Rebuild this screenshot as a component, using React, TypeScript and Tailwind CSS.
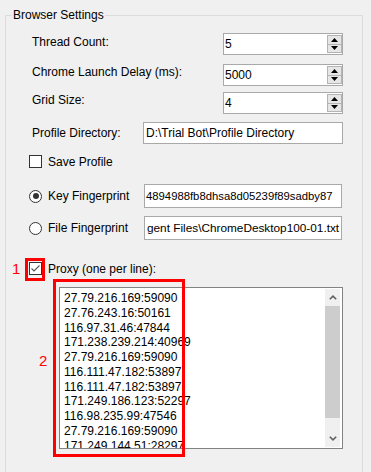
import React from "react";

const proxies = [
  "27.79.216.169:59090",
  "27.76.243.16:50161",
  "116.97.31.46:47844",
  "171.238.239.214:40969",
  "27.79.216.169:59090",
  "116.111.47.182:53897",
  "116.111.47.182:53897",
  "171.249.186.123:52297",
  "116.98.235.99:47546",
  "27.79.216.169:59090",
  "171.249.144.51:28297",
];

function SpinBox({ value }: { value: string }) {
  return (
    <div className="flex h-[22px] w-[120px] border border-[#a9a9a9] bg-white">
      <div className="flex flex-1 items-center overflow-hidden pl-[1px] leading-[16px]">{value}</div>
      <div className="flex w-[15px] flex-col py-[1px]">
        <div className="flex flex-1 items-center justify-center border border-[#b4b4b4] bg-[#e6e6e6]">
          <svg width="7" height="4" viewBox="0 0 7 4">
            <polygon points="3.5,0 7,4 0,4" fill="#000" />
          </svg>
        </div>
        <div className="flex flex-1 items-center justify-center border border-t-0 border-[#b4b4b4] bg-[#e6e6e6]">
          <svg width="7" height="4" viewBox="0 0 7 4">
            <polygon points="0,0 7,0 3.5,4" fill="#000" />
          </svg>
        </div>
      </div>
    </div>
  );
}

function CheckBox({ checked }: { checked?: boolean }) {
  return (
    <div className="flex h-[13px] w-[13px] shrink-0 items-center justify-center border border-[#333333] bg-white">
      {checked && (
        <svg width="11" height="11" viewBox="0 0 11 11">
          <polyline points="1.5,5.5 4,8 9.5,2.5" fill="none" stroke="#555" strokeWidth="1.1" />
        </svg>
      )}
    </div>
  );
}

function Radio({ checked }: { checked?: boolean }) {
  return (
    <div className="flex h-[13px] w-[13px] shrink-0 items-center justify-center rounded-full border border-[#333333] bg-white">
      {checked && <div className="h-[6px] w-[6px] rounded-full bg-[#333333]" />}
    </div>
  );
}

export default function App() {
  return (
    <div className="relative h-[472px] w-[371px] overflow-hidden bg-[#f0f0f0] pl-[5px] pt-[15px] font-['Liberation_Sans',Arial,sans-serif] text-[12px] text-black">
      <div className="h-[480px] w-[358px] border border-[#dcdcdc]">
        <div className="-mt-[9px] ml-[6px] w-fit bg-[#f0f0f0] px-[1px] leading-[16px]">Browser Settings</div>

        {/* Thread count */}
        <div className="mt-[10px] flex items-start pl-[26px]">
          <div className="mt-[1px] w-[191px] leading-[16px]">Thread Count:</div>
          <SpinBox value="5" />
        </div>
        <div className="mt-[9px] flex items-start pl-[26px]">
          <div className="w-[191px] leading-[16px]">Chrome Launch Delay (ms):</div>
          <SpinBox value="5000" />
        </div>
        <div className="mt-[6px] flex items-start pl-[26px]">
          <div className="w-[191px] leading-[16px]">Grid Size:</div>
          <SpinBox value="4" />
        </div>

        {/* Profile directory */}
        <div className="mt-[8px] flex items-center pl-[26px]">
          <div className="w-[111px] leading-[16px]">Profile Directory:</div>
          <div className="flex h-[22px] w-[200px] items-center overflow-hidden whitespace-nowrap border border-[#a9a9a9] bg-white pl-[2px] leading-[16px]">
            {"D:\\Trial Bot\\Profile Directory"}
          </div>
        </div>

        {/* Save profile */}
        <div className="mt-[11px] flex h-[13px] items-center pl-[23px]">
          <CheckBox />
          <div className="ml-[6px] leading-[16px]">Save Profile</div>
        </div>

        {/* Key fingerprint */}
        <div className="mt-[16px] flex items-center pl-[23px]">
          <Radio checked />
          <div className="ml-[6px] w-[96px] leading-[16px]">Key Fingerprint</div>
          <div className="flex h-[24px] w-[198px] items-center overflow-hidden whitespace-nowrap border border-[#a9a9a9] bg-white pl-[1px] text-[11.3px] leading-[16px]">
            4894988fb8dhsa8d05239f89sadby87
          </div>
        </div>

        {/* File fingerprint */}
        <div className="mt-[8px] flex items-center pl-[23px]">
          <Radio />
          <div className="ml-[6px] w-[96px] leading-[16px]">File Fingerprint</div>
          <div className="flex h-[24px] w-[198px] items-center overflow-hidden whitespace-nowrap border border-[#a9a9a9] bg-white pl-[2px] text-[11.8px] leading-[16px]">
            {"gent Files\\ChromeDesktop100-01.txt"}
          </div>
        </div>

        {/* Proxy */}
        <div className="mt-[22px] flex h-[13px] items-center pl-[23px]">
          <CheckBox checked />
          <div className="ml-[6px] leading-[16px]">Proxy (one per line):</div>
        </div>

        <div className="mt-[12px] pl-[53px]">
          <div className="flex h-[162px] w-[284px] border border-[#828282] bg-white">
            <div className="flex-1 overflow-hidden pl-[4px] pt-[3px] leading-[14.75px]">
              {proxies.map((p, i) => (
                <div key={i} className="whitespace-nowrap">
                  {p}
                </div>
              ))}
            </div>
            <div className="my-[1px] mr-[2px] flex w-[15px] flex-col bg-[#f0f0f0]">
              <div className="flex h-[17px] items-center justify-center">
                <svg width="8" height="5" viewBox="0 0 8 5">
                  <polyline points="0.8,4.3 4,1.2 7.2,4.3" fill="none" stroke="#606060" strokeWidth="1.6" />
                </svg>
              </div>
              <div className="h-[112px] bg-[#cdcdcd]" />
              <div className="flex-1" />
              <div className="flex h-[17px] items-center justify-center">
                <svg width="8" height="5" viewBox="0 0 8 5">
                  <polyline points="0.8,0.7 4,3.8 7.2,0.7" fill="none" stroke="#606060" strokeWidth="1.6" />
                </svg>
              </div>
            </div>
          </div>
        </div>
      </div>

      {/* Annotations */}
      <div className="absolute left-[25px] top-[258px] h-[23px] w-[20px] border-[3px] border-[#ff0000]" />
      <div className="absolute left-[53px] top-[279px] h-[178px] w-[132px] border-[3px] border-[#ff0000]" />
      <div className="absolute left-[12px] top-[260px] text-[15px] leading-[18px] text-[#ff0000]">1</div>
      <div className="absolute left-[39px] top-[352px] text-[15px] leading-[18px] text-[#ff0000]">2</div>
    </div>
  );
}
